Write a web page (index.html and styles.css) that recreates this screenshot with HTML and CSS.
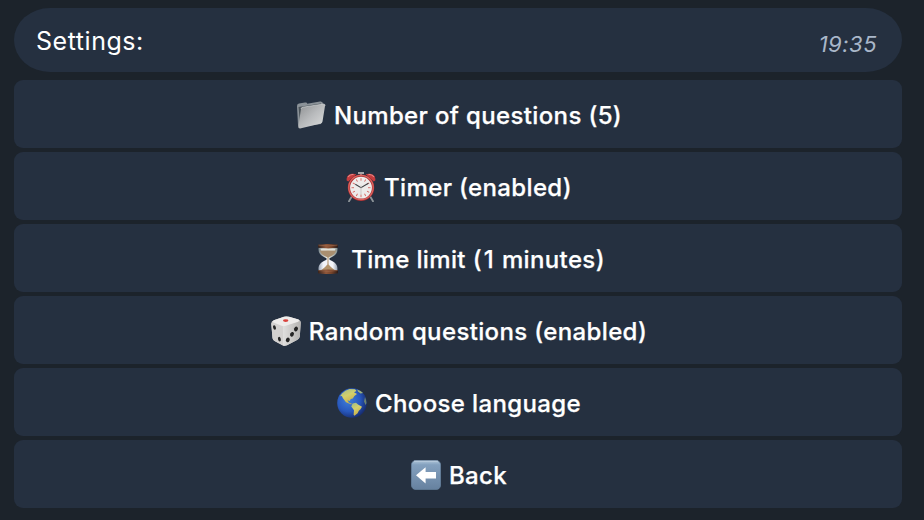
FILE: index.html
```html
<!DOCTYPE html>
<html lang="en">
<head>
<meta charset="utf-8">
<title>Settings</title>
<link rel="stylesheet" href="styles.css">
</head>
<body>
<main class="chat">
  <header class="message"><span>Settings:</span><time class="time">19:35</time></header>
  <nav class="keyboard">
    <button class="key">
      <svg class="icon" viewBox="0 0 30 30">
        <defs><linearGradient id="fold" x1="0" y1="0" x2="1" y2="1"><stop offset="0" stop-color="#8d8f91"/><stop offset=".5" stop-color="#b9bbbd"/><stop offset="1" stop-color="#dcdddd"/></linearGradient></defs>
        <path d="M1 6Q1 4 3 3.6L9 2.5Q11 2 11.3 3.7L24 1.5Q27 1 27 4L25 24L4 27Q2 27 2 25Z" fill="#8b9298"/>
        <path d="M2.5 7L25 3.4V8L4 23Z" fill="#4b5359"/>
        <path d="M5 9Q5.2 7.5 7 7.2L27.5 4Q29.3 4 29 6L26.5 21.5Q26.2 23 25 23.4L4 28.4Q2 28.4 2.3 26.5Z" fill="url(#fold)"/>
        <path d="M5 9Q5.2 7.5 7 7.2L27.5 4Q29.3 4 29 6" fill="none" stroke="#d1d4d5" stroke-width=".7"/>
      </svg>
      <span>Number of questions (5)</span>
    </button>
    <button class="key">
      <svg class="icon" viewBox="0 0 30 30">
        <path d="M5.5 25L3 29.3M24.5 25L27 29.3" stroke="#8d9499" stroke-width="1.8" stroke-linecap="round"/>
        <path d="M12 .9H18M15 1V5" stroke="#a4a6a9" stroke-width="2"/>
        <path d="M.7 8.5C-.2 3 5 .4 10.4 2.2L2.3 9.5ZM29.3 8.5C30.2 3 25 .4 19.6 2.2L27.7 9.5Z" fill="#c43b3d"/>
        <path d="M2 5Q4 2 7.5 2.5M28 5Q26 2 22.5 2.5" stroke="#e98986" stroke-width="1.1" fill="none"/>
        <circle cx="15" cy="15.7" r="13.2" fill="#a92f32"/>
        <circle cx="15" cy="15.5" r="12.2" fill="none" stroke="#dc6660" stroke-width="1.2"/>
        <circle cx="15" cy="15.7" r="10.9" fill="#eeecea"/>
        <g stroke="#d56560" stroke-width=".9"><path id="tick" d="M15 6.2V8.7M15 22.7V25.2"/><use href="#tick" transform="rotate(30 15 15.7)"/><use href="#tick" transform="rotate(60 15 15.7)"/><use href="#tick" transform="rotate(90 15 15.7)"/><use href="#tick" transform="rotate(120 15 15.7)"/><use href="#tick" transform="rotate(150 15 15.7)"/></g>
        <path d="M9.3 12.2L15 15.7L22.4 11.2" stroke="#404244" stroke-width="1.1" fill="none"/>
        <path d="M15 13.5V23" stroke="#bcbcb7" stroke-width=".7"/>
      </svg>
      <span>Timer (enabled)</span>
    </button>
    <button class="key">
      <svg class="icon" viewBox="0 0 30 30">
        <defs>
          <linearGradient id="wood"><stop stop-color="#38231b"/><stop offset=".4" stop-color="#91583b"/><stop offset=".7" stop-color="#734128"/><stop offset="1" stop-color="#2c1b17"/></linearGradient>
          <linearGradient id="glass"><stop stop-color="#7d898d"/><stop offset=".45" stop-color="#eef0ed"/><stop offset="1" stop-color="#87928f"/></linearGradient>
          <linearGradient id="bulb"><stop stop-color="#9aa5b5"/><stop offset=".25" stop-color="#f1f3f8"/><stop offset=".75" stop-color="#f4f5f9"/><stop offset="1" stop-color="#98a3b3"/></linearGradient>
        </defs>
        <path d="M5.6 4H24.4C25 9 22.5 11.5 16.5 14.2V15H13.5V14.2C7.5 11.5 5 9 5.6 4Z" fill="url(#glass)"/>
        <path d="M13.5 15H16.5V15.8C22.5 18.5 25 21 24.4 26H5.6C5 21 7.5 18.5 13.5 15.8Z" fill="url(#bulb)"/>
        <path d="M7 6.5Q15 5.5 23 6.5C22.5 10 19 11.8 15 13.7C11 11.8 7.5 10 7 6.5Z" fill="#a98f70"/>
        <path d="M7.5 4.8H22.5L21.8 6.6H8.2Z" fill="#e3e2da"/>
        <path d="M14.6 13H15.4L15.6 20.5Q18 23.5 21.5 26H8.5Q12 23.5 14.4 20.5Z" fill="#b3936b"/>
        <path d="M5 .8Q15-.6 25 .8V3.6Q15 5.2 5 3.6ZM5 26.2Q15 24.8 25 26.2V29.3Q15 30.8 5 29.3Z" fill="url(#wood)"/>
        <path d="M5.5 1.1Q15 2.8 24.5 1.1M5.5 26.5Q15 28 24.5 26.5" stroke="#a66e50" stroke-width=".6" fill="none"/>
      </svg>
      <span>Time limit (<span class="digit">1</span> minutes)</span>
    </button>
    <button class="key">
      <svg class="icon" viewBox="0 0 30 30">
        <defs><linearGradient id="side"><stop stop-color="#e0dfde"/><stop offset="1" stop-color="#b5b3b1"/></linearGradient></defs>
        <path d="M2.8 4.2L13 .8Q15 .2 18 .8L27.5 3.5Q30 4.5 29.7 7L28.8 20.5Q28.5 22.5 26 24L16 29.3Q13.6 30.2 11.5 29.2L3.6 25Q1.7 24 1.5 22L.3 8Q0 5.3 2.8 4.2Z" fill="#d8d6d5"/>
        <path d="M1.3 5.5L11.7 9.8L12.3 29.5Q11.5 29.3 3.6 25Q1.7 24 1.5 22L.3 8Z" fill="#d3d1d0"/>
        <path d="M12 10L29 5Q29.9 5.5 29.7 7L28.8 20.5Q28.5 22.5 26 24L16 29.3Q14 30 12 29.4Z" fill="url(#side)"/>
        <path d="M2.8 4.2L13 .8Q15 .2 18 .8L27.5 3.5Q29 4.5 27 5.8L14 10Q12.3 10.3 10.5 9.8L2 6.3Q1.4 5 2.8 4.2Z" fill="#eeeceb"/>
        <ellipse cx="14.7" cy="4.6" rx="2.7" ry="1.3" fill="#d9433e"/>
        <g fill="#252525"><ellipse cx="3.5" cy="11.5" rx="1.4" ry="2.3" transform="rotate(-15 3.5 11.5)"/><ellipse cx="8.4" cy="23.2" rx="1.4" ry="2.4" transform="rotate(-15 8.4 23.2)"/><ellipse cx="25" cy="13" rx="1.9" ry="2.4" transform="rotate(25 25 13)"/><ellipse cx="21" cy="18.3" rx="1.9" ry="2.4" transform="rotate(25 21 18.3)"/><ellipse cx="16.8" cy="23.9" rx="1.9" ry="2.4" transform="rotate(25 16.8 23.9)"/></g>
      </svg>
      <span>Random questions (enabled)</span>
    </button>
    <button class="key">
      <svg class="icon" viewBox="0 0 30 30">
        <defs>
          <radialGradient id="sea" cx=".38" cy=".4" r=".65"><stop stop-color="#3f7fdb"/><stop offset=".6" stop-color="#2858bd"/><stop offset="1" stop-color="#172c6e"/></radialGradient>
          <linearGradient id="land" x2=".5" y2="1"><stop stop-color="#9dbb8a"/><stop offset=".5" stop-color="#d3d06c"/><stop offset="1" stop-color="#c9ae48"/></linearGradient>
        </defs>
        <circle cx="15" cy="15" r="14.8" fill="url(#sea)"/>
        <path d="M5 5.5Q8 2.2 12.5 1.1L18 1.3L19.5 3L17 4.2L20 6L17.4 8L15.8 10.4L13.7 11L12.7 13L10.5 12.2L11.8 14.6L15.3 16L13.8 16.2L9 14.3L6 10.2L4.8 8L3 8.2Z" fill="url(#land)"/>
        <path d="M20 1.4Q24 2.5 26 5.1L23.5 5.4L21 3.6Z" fill="#9eb27e"/>
        <path d="M15.6 15.5L19 14.8L21 16.6L25 18.7L23.5 21.3L21.8 22.7L20.6 25.3L17.5 27.7L16.6 26.8L17 22.2L14.3 18.6Z" fill="url(#land)"/>
        <path d="M28 9L29 12L29.5 15L28.6 17L27 13.5Z" fill="#6c8370"/>
      </svg>
      <span>Choose language</span>
    </button>
    <button class="key">
      <svg class="icon" viewBox="0 0 30 30">
        <defs><linearGradient id="tile" x2="0" y2="1"><stop stop-color="#b0c6d9"/><stop offset=".15" stop-color="#84a1bf"/><stop offset="1" stop-color="#66819f"/></linearGradient></defs>
        <rect x=".4" y=".4" width="29.2" height="29.2" rx="4.5" fill="url(#tile)" stroke="#6885a2" stroke-width=".7"/>
        <path d="M3 1.2H27" stroke="#bfd1df" stroke-width=".8"/>
        <path d="M5 15.2L14.6 7.2V12H25V18.5H14.6V23.4Z" fill="#fff"/>
      </svg>
      <span>Back</span>
    </button>
  </nav>
</main>
</body>
</html>
```
FILE: styles.css
```css
* { box-sizing: border-box; }
body {
  margin: 0;
  height: 520px;
  background: #1c232b;
  color: #fff;
  font-family: Inter, sans-serif;
}
.chat {
  width: 888px;
  margin-left: 14px;
  padding-top: 8px;
}
.message {
  display: flex;
  align-items: center;
  justify-content: space-between;
  height: 64px;
  padding: 2px 25px 0 22px;
  border-radius: 36px / 32px;
  background: #253040;
  font-size: 25px;
  letter-spacing: 0.55px;
}
.time {
  padding-top: 6px;
  color: #a9b7c9;
  font-size: 22px;
  font-style: italic;
  letter-spacing: 0.5px;
}
.keyboard {
  display: grid;
  gap: 4px;
  margin-top: 8px;
}
.key {
  display: flex;
  align-items: center;
  justify-content: center;
  gap: 8px;
  height: 68px;
  padding: 3px 0 0 2px;
  border: 0;
  border-radius: 9px;
  background: #253040;
  color: #fff;
  font: 500 24px Inter, sans-serif;
  letter-spacing: 0.36px;
  -webkit-text-stroke: 0.25px #fff;
}
.digit { margin: 0 1px 0 2px; }
.icon {
  width: 30px;
  height: 30px;
  flex: none;
  margin-bottom: 2px;
}
```
